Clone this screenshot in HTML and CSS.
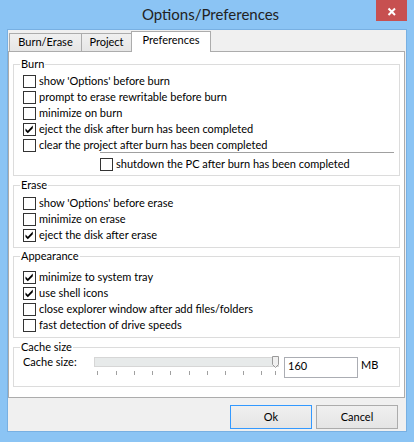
FILE: index.html
```html
<!DOCTYPE html>
<html>
<head>
<meta charset="utf-8">
<title>Options/Preferences</title>
<link rel="stylesheet" href="styles.css">
</head>
<body>
<div class="window">
  <div class="titlebar">
    <div class="title">Options/Preferences</div>
    <div class="close">
      <svg width="31" height="21" viewBox="0 0 31 21"><path d="M12.5 8.5 L19 15 M19 8.5 L12.5 15" stroke="#fff" stroke-width="2" fill="none"/></svg>
    </div>
  </div>
  <div class="client">
    <div class="tabs">
      <div class="tab tab-burn">Burn/Erase</div>
      <div class="tab tab-project">Project</div>
      <div class="tab tab-active">Preferences</div>
    </div>
    <div class="panel">
      <div class="group group-burn">
        <div class="legend">Burn</div>
        <div class="rows rows-burn">
          <div class="row"><span class="cb"></span>show 'Options' before burn</div>
          <div class="row"><span class="cb"></span>prompt to erase rewritable before burn</div>
          <div class="row"><span class="cb"></span>minimize on burn</div>
          <div class="row"><span class="cb"><svg width="11" height="11" viewBox="0 0 11 11"><path d="M1.5 4.5 L3.8 6.8 L8.8 1.6 L8.8 4.2 L3.8 9.3 L1.5 7 Z" fill="#000"/></svg></span>eject the disk after burn has been completed</div>
          <div class="row"><span class="cb"></span>clear the project after burn has been completed</div>
        </div>
        <div class="sep"></div>
        <div class="row row-indent"><span class="cb"></span>shutdown the PC after burn has been completed</div>
      </div>

      <div class="group group-erase">
        <div class="legend">Erase</div>
        <div class="rows rows-erase">
          <div class="row"><span class="cb"></span>show 'Options' before erase</div>
          <div class="row"><span class="cb"></span>minimize on erase</div>
          <div class="row"><span class="cb"><svg width="11" height="11" viewBox="0 0 11 11"><path d="M1.5 4.5 L3.8 6.8 L8.8 1.6 L8.8 4.2 L3.8 9.3 L1.5 7 Z" fill="#000"/></svg></span>eject the disk after erase</div>
        </div>
      </div>

      <div class="group group-appearance">
        <div class="legend">Appearance</div>
        <div class="rows rows-appearance">
          <div class="row"><span class="cb"><svg width="11" height="11" viewBox="0 0 11 11"><path d="M1.5 4.5 L3.8 6.8 L8.8 1.6 L8.8 4.2 L3.8 9.3 L1.5 7 Z" fill="#000"/></svg></span>minimize to system tray</div>
          <div class="row"><span class="cb"><svg width="11" height="11" viewBox="0 0 11 11"><path d="M1.5 4.5 L3.8 6.8 L8.8 1.6 L8.8 4.2 L3.8 9.3 L1.5 7 Z" fill="#000"/></svg></span>use shell icons</div>
          <div class="row"><span class="cb"></span>close explorer window after add files/folders</div>
          <div class="row"><span class="cb"></span>fast detection of drive speeds</div>
        </div>
      </div>

      <div class="group group-cache">
        <div class="legend">Cache size</div>
        <div class="cache-row">
          <div class="cache-label">Cache size:</div>
          <div class="slider">
            <div class="track"></div>
            <svg class="ticks" width="186" height="4" viewBox="0 0 186 4">
              <g stroke="#a0a0a0" stroke-width="1">
                <line x1="3.5" y1="0" x2="3.5" y2="4"/>
                <line x1="22.5" y1="0" x2="22.5" y2="4"/>
                <line x1="40.5" y1="0" x2="40.5" y2="4"/>
                <line x1="58.5" y1="0" x2="58.5" y2="4"/>
                <line x1="76.5" y1="0" x2="76.5" y2="4"/>
                <line x1="95.5" y1="0" x2="95.5" y2="4"/>
                <line x1="113.5" y1="0" x2="113.5" y2="4"/>
                <line x1="131.5" y1="0" x2="131.5" y2="4"/>
                <line x1="149.5" y1="0" x2="149.5" y2="4"/>
                <line x1="167.5" y1="0" x2="167.5" y2="4"/>
                <line x1="181.5" y1="0" x2="181.5" y2="4"/>
              </g>
            </svg>
            <svg class="thumb" width="7" height="12" viewBox="0 0 7 12"><path d="M0.5 0.5 H6.5 V8.5 L3.5 11.5 L0.5 8.5 Z" fill="#f0f0f0" stroke="#9a9a9a" stroke-width="1"/></svg>
          </div>
          <div class="edit">160</div>
          <div class="unit">MB</div>
        </div>
      </div>
    </div>
    <div class="buttons">
      <div class="btn btn-default">Ok</div>
      <div class="btn">Cancel</div>
    </div>
  </div>
</div>
</body>
</html>
```

FILE: styles.css
```css
body {
  margin: 0;
  background: #8bc4f4;
  font-family: "Segoe UI", Lato, sans-serif;
  font-size: 11px;
  color: #000;
}

.window {
  width: 414px;
  height: 442px;
  background: #8bc4f4;
  display: flex;
  flex-direction: column;
  overflow: hidden;
}

.titlebar {
  height: 29px;
  display: flex;
  align-items: flex-start;
  flex: none;
}

.title {
  flex: 1;
  text-align: center;
  padding: 5px 0 0 45px;
  font-size: 15px;
  line-height: 18px;
  color: #222;
}

.close {
  width: 31px;
  height: 21px;
  background: #c75050;
  margin-right: 7px;
  flex: none;
}

.close svg {
  display: block;
}

.client {
  margin: 0 7px;
  height: 403px;
  box-sizing: border-box;
  border: 1px solid #78b0e2;
  background: #f0f0f0;
  display: flex;
  flex-direction: column;
  flex: none;
}

.tabs {
  height: 21px;
  display: flex;
  align-items: flex-end;
  padding-left: 1px;
  flex: none;
}

.tab {
  box-sizing: border-box;
  height: 18px;
  border: 1px solid #acacac;
  border-bottom: none;
  background: linear-gradient(#f0f0f0, #e6e6e6);
  text-align: center;
  line-height: 16px;
  white-space: nowrap;
}

.tab-burn {
  width: 73px;
}

.tab-project {
  width: 51px;
  margin-left: -1px;
}

.tab-active {
  width: 80px;
  margin-left: -1px;
  height: 21px;
  margin-bottom: -1px;
  background: #fff;
  position: relative;
  z-index: 1;
}

.panel {
  margin-right: 1px;
  height: 347px;
  box-sizing: border-box;
  border: 1px solid #acacac;
  background: #fff;
  padding: 0 4px;
  flex: none;
}

.group {
  border: 1px solid #dcdcdc;
  padding: 0 5px 3px 9px;
}

.legend {
  width: fit-content;
  margin: -8px 0 0 -3px;
  padding: 0 1px;
  line-height: 14px;
  height: 14px;
  background: #fff;
  white-space: nowrap;
}

.row {
  display: flex;
  align-items: flex-start;
  height: 16px;
  line-height: 16px;
  white-space: nowrap;
}

.cb {
  width: 13px;
  height: 13px;
  box-sizing: border-box;
  border: 1px solid #333;
  background: #fff;
  margin: 2px 3px 0 0;
  flex: none;
}

.cb svg {
  display: block;
}

.group-burn {
  margin-top: 12px;
}

.rows-burn {
  margin-top: 2px;
}

.sep {
  margin: -1px 0 0 77px;
  border-top: 1px solid #a0a0a0;
  height: 0;
}

.row-indent {
  margin: 3px 0 0 77px;
}

.group-erase {
  margin-top: 9px;
  padding-bottom: 4px;
}

.rows-erase {
  margin-top: 3px;
}

.group-appearance {
  margin-top: 8px;
  padding-bottom: 4px;
}

.rows-appearance {
  margin-top: 6px;
}

.group-cache {
  margin-top: 9px;
  padding-bottom: 8px;
}

.cache-row {
  display: flex;
  align-items: flex-start;
  margin-top: 1px;
}

.cache-label {
  width: 71px;
  line-height: 14px;
  white-space: nowrap;
  flex: none;
}

.slider {
  width: 186px;
  margin-top: 2px;
  position: relative;
  flex: none;
}

.track {
  width: 185px;
  height: 10px;
  box-sizing: border-box;
  border: 1px solid #d6d6d6;
  background: #e7eaea;
}

.ticks {
  display: block;
  margin-top: 4px;
}

.thumb {
  position: absolute;
  left: 178px;
  top: -1px;
  display: block;
}

.edit {
  width: 74px;
  height: 21px;
  box-sizing: border-box;
  margin: 2px 0 0 4px;
  border: 1px solid #abadb3;
  background: #fff;
  padding: 0 3px;
  line-height: 15px;
  flex: none;
}

.unit {
  margin: 3px 0 0 3px;
  line-height: 14px;
}

.buttons {
  display: flex;
  justify-content: flex-end;
  gap: 4px;
  padding: 7px 8px 0 0;
}

.btn {
  width: 82px;
  height: 24px;
  box-sizing: border-box;
  border: 1px solid #acacac;
  background: linear-gradient(#f0f0f0, #e5e5e5);
  display: flex;
  align-items: center;
  justify-content: center;
  line-height: 16px;
}

.btn-default {
  border-color: #3399ff;
}
```
